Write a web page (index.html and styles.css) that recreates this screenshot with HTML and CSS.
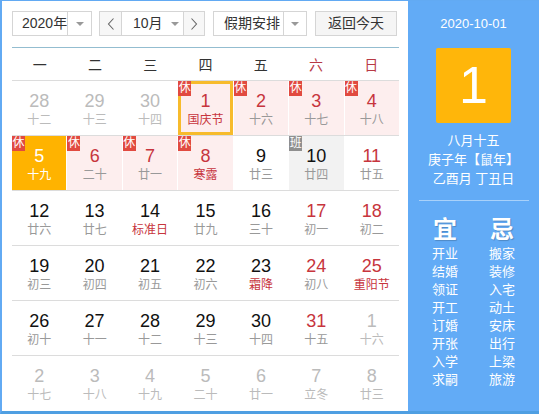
FILE: index.html
```html
<!DOCTYPE html>
<html lang="zh">
<head>
<meta charset="utf-8">
<title>万年历</title>
<link rel="stylesheet" href="styles.css">
</head>
<body>
<div class="cal">
  <div class="main">
    <div class="toolbar">
      <div class="sel year"><span class="sel-text">2020年</span><span class="sel-arrow"><i class="tri"></i></span></div>
      <div class="month">
        <span class="nav"><svg width="8" height="12" viewBox="0 0 8 12"><polyline points="6.5,0.5 1.5,6 6.5,11.5" fill="none" stroke="#666" stroke-width="1.1"/></svg></span>
        <span class="month-text">10月<i class="tri"></i></span>
        <span class="nav nav-r"><svg width="8" height="12" viewBox="0 0 8 12"><polyline points="1.5,0.5 6.5,6 1.5,11.5" fill="none" stroke="#666" stroke-width="1.1"/></svg></span>
      </div>
      <div class="sel holiday"><span class="sel-text">假期安排</span><span class="sel-arrow"><i class="tri"></i></span></div>
      <div class="btn">返回今天</div>
    </div>
    <div class="week">
      <span>一</span><span>二</span><span>三</span><span>四</span><span>五</span><span class="we">六</span><span class="we">日</span>
    </div>
    <div class="rows">
      <div class="row">
        <div class="cell other"><div class="n">28</div><div class="l">十二</div></div>
        <div class="cell other"><div class="n">29</div><div class="l">十三</div></div>
        <div class="cell other"><div class="n">30</div><div class="l">十四</div></div>
        <div class="cell rest red today"><i class="badge">休</i><div class="n">1</div><div class="l fest">国庆节</div></div>
        <div class="cell rest red"><i class="badge">休</i><div class="n">2</div><div class="l">十六</div></div>
        <div class="cell rest red"><i class="badge">休</i><div class="n">3</div><div class="l">十七</div></div>
        <div class="cell rest red"><i class="badge">休</i><div class="n">4</div><div class="l">十八</div></div>
      </div>
      <div class="row">
        <div class="cell active"><i class="badge">休</i><div class="n">5</div><div class="l">十九</div></div>
        <div class="cell rest red"><i class="badge">休</i><div class="n">6</div><div class="l">二十</div></div>
        <div class="cell rest red"><i class="badge">休</i><div class="n">7</div><div class="l">廿一</div></div>
        <div class="cell rest red"><i class="badge">休</i><div class="n">8</div><div class="l fest">寒露</div></div>
        <div class="cell"><div class="n">9</div><div class="l">廿三</div></div>
        <div class="cell work"><i class="badge gray">班</i><div class="n">10</div><div class="l">廿四</div></div>
        <div class="cell red"><div class="n">11</div><div class="l">廿五</div></div>
      </div>
      <div class="row">
        <div class="cell"><div class="n">12</div><div class="l">廿六</div></div>
        <div class="cell"><div class="n">13</div><div class="l">廿七</div></div>
        <div class="cell"><div class="n">14</div><div class="l fest">标准日</div></div>
        <div class="cell"><div class="n">15</div><div class="l">廿九</div></div>
        <div class="cell"><div class="n">16</div><div class="l">三十</div></div>
        <div class="cell red"><div class="n">17</div><div class="l">初一</div></div>
        <div class="cell red"><div class="n">18</div><div class="l">初二</div></div>
      </div>
      <div class="row">
        <div class="cell"><div class="n">19</div><div class="l">初三</div></div>
        <div class="cell"><div class="n">20</div><div class="l">初四</div></div>
        <div class="cell"><div class="n">21</div><div class="l">初五</div></div>
        <div class="cell"><div class="n">22</div><div class="l">初六</div></div>
        <div class="cell"><div class="n">23</div><div class="l fest">霜降</div></div>
        <div class="cell red"><div class="n">24</div><div class="l">初八</div></div>
        <div class="cell red"><div class="n">25</div><div class="l fest">重阳节</div></div>
      </div>
      <div class="row">
        <div class="cell"><div class="n">26</div><div class="l">初十</div></div>
        <div class="cell"><div class="n">27</div><div class="l">十一</div></div>
        <div class="cell"><div class="n">28</div><div class="l">十二</div></div>
        <div class="cell"><div class="n">29</div><div class="l">十三</div></div>
        <div class="cell"><div class="n">30</div><div class="l">十四</div></div>
        <div class="cell red"><div class="n">31</div><div class="l">十五</div></div>
        <div class="cell other"><div class="n">1</div><div class="l">十六</div></div>
      </div>
      <div class="row">
        <div class="cell other"><div class="n">2</div><div class="l">十七</div></div>
        <div class="cell other"><div class="n">3</div><div class="l">十八</div></div>
        <div class="cell other"><div class="n">4</div><div class="l">十九</div></div>
        <div class="cell other"><div class="n">5</div><div class="l">二十</div></div>
        <div class="cell other"><div class="n">6</div><div class="l">廿一</div></div>
        <div class="cell other"><div class="n">7</div><div class="l">立冬</div></div>
        <div class="cell other"><div class="n">8</div><div class="l">廿三</div></div>
      </div>
    </div>
  </div>
  <div class="side">
    <div class="s-date">2020-10-01</div>
    <div class="big">1</div>
    <div class="s-lunar first">八月十五</div>
    <div class="s-lunar">庚子年【鼠年】</div>
    <div class="s-lunar">乙酉月 丁丑日</div>
    <div class="s-line"></div>
    <div class="yiji">
      <div class="col">
        <div class="h">宜</div>
        <div>开业</div><div>结婚</div><div>领证</div><div>开工</div><div>订婚</div><div>开张</div><div>入学</div><div>求嗣</div>
      </div>
      <div class="col">
        <div class="h">忌</div>
        <div>搬家</div><div>装修</div><div>入宅</div><div>动土</div><div>安床</div><div>出行</div><div>上梁</div><div>旅游</div>
      </div>
    </div>
  </div>
</div>
</body>
</html>
```

FILE: styles.css
```css
* { box-sizing: border-box; }
html, body { margin: 0; padding: 0; background: #fff; }
body {
  font-family: "Liberation Sans", "Noto Sans CJK SC", sans-serif;
  color: #333;
}
.cal {
  width: 539px;
  height: 414px;
  display: flex;
  border-left: 2px solid #62aaf3;
  border-top: 1px solid #62aaf3;
  border-bottom: 3px solid #4f9fe2;
  overflow: hidden;
}
.main {
  width: 406px;
  padding: 10px 9px 0 10px;
  background: #fff;
}
.toolbar {
  display: flex;
  height: 25px;
  font-size: 14px;
  color: #333;
}
.sel, .month, .btn {
  border: 1px solid #d5d5d5;
  height: 25px;
  display: flex;
  align-items: stretch;
  background: #fff;
  white-space: nowrap;
}
.year { width: 80px; }
.year .sel-text { width: 54px; padding-left: 9px; }
.month { width: 106px; margin-left: 7px; }
.holiday { width: 94px; margin-left: 8px; }
.holiday .sel-text { width: 69px; padding-left: 10px; }
.sel-text {
  display: flex;
  align-items: center;
  line-height: 23px;
  white-space: nowrap;
  overflow: hidden;
}
.sel-arrow {
  flex: 1;
  border-left: 1px solid #d5d5d5;
  display: flex;
  align-items: center;
  justify-content: center;
}
.tri {
  display: inline-block;
  width: 0;
  height: 0;
  border-left: 4px solid transparent;
  border-right: 4px solid transparent;
  border-top: 4px solid #999;
}
.nav {
  width: 22px;
  display: flex;
  align-items: center;
  justify-content: center;
  background: #f7f7f7;
  border-right: 1px solid #d5d5d5;
}
.nav-r {
  width: 21px;
  border-right: 0;
  border-left: 1px solid #d5d5d5;
}
.month-text {
  flex: 1;
  display: flex;
  align-items: center;
  padding-left: 11px;
  line-height: 23px;
}
.month-text .tri { margin-left: 8px; }
.btn {
  width: 82px;
  margin-left: 8px;
  background: #f5f5f5;
  justify-content: center;
  align-items: center;
  line-height: 23px;
}
.week {
  margin-top: 11px;
  border-top: 1px solid #93bdd0;
  height: 34px;
  border-bottom: 1px solid #dcdcdc;
  display: grid;
  grid-template-columns: repeat(7, 1fr);
  align-items: center;
  text-align: center;
  font-size: 14px;
  color: #333;
}
.week .we { color: #b83a45; }
.row {
  display: grid;
  grid-template-columns: repeat(7, 1fr);
  column-gap: 1px;
  height: 55px;
  border-bottom: 1px solid #dcdcdc;
}
.row:last-child { border-bottom: 0; height: 54px; }
.cell {
  position: relative;
  text-align: center;
  padding-top: 9px;
  background: #fff;
}
.n {
  font-size: 18px;
  line-height: 22px;
  color: #111;
}
.l {
  font-size: 12px;
  line-height: 16px;
  color: #999;
}
.cell.red .n { color: #c7353d; }
.l.fest { color: #c7353d; }
.cell.rest { background: #fdeeee; }
.cell.work { background: #f2f2f2; }
.cell.other .n, .cell.other .l { color: #bbb; }
.cell.today { box-shadow: inset 0 0 0 3px #f7bb2c; }
.cell.active { background: #ffb300; }
.cell.active .n, .cell.active .l { color: #fff; }
.badge {
  position: absolute;
  top: 0;
  left: 0;
  width: 13px;
  height: 15px;
  line-height: 15px;
  font-size: 12px;
  font-style: normal;
  color: #fff;
  background: #e14a40;
  text-align: center;
}
.badge.gray { background: #8f8f8f; }
.side {
  flex: 1;
  background: #62abf6;
  color: #fff;
  display: flex;
  flex-direction: column;
  align-items: center;
  padding-top: 14px;
}
.s-date {
  font-size: 13px;
  line-height: 18px;
}
.big {
  margin-top: 15px;
  width: 75px;
  height: 75px;
  background: #ffb60a;
  border-radius: 2px;
  font-size: 52px;
  line-height: 75px;
  text-align: center;
  color: #fff;
}
.s-lunar {
  font-size: 13px;
  line-height: 19px;
}
.s-lunar.first { margin-top: 8px; }
.s-line {
  margin-top: 12px;
  width: 110px;
  height: 1px;
  background: rgba(255,255,255,0.45);
}
.yiji {
  margin-top: 14px;
  display: grid;
  grid-template-columns: 50px 50px;
  column-gap: 7px;
  text-align: center;
  font-size: 13px;
  line-height: 18px;
}
.yiji .h {
  font-size: 24px;
  line-height: 30px;
  font-weight: bold;
  text-shadow: 1px 1px 1px rgba(0,0,0,0.2);
}
```
